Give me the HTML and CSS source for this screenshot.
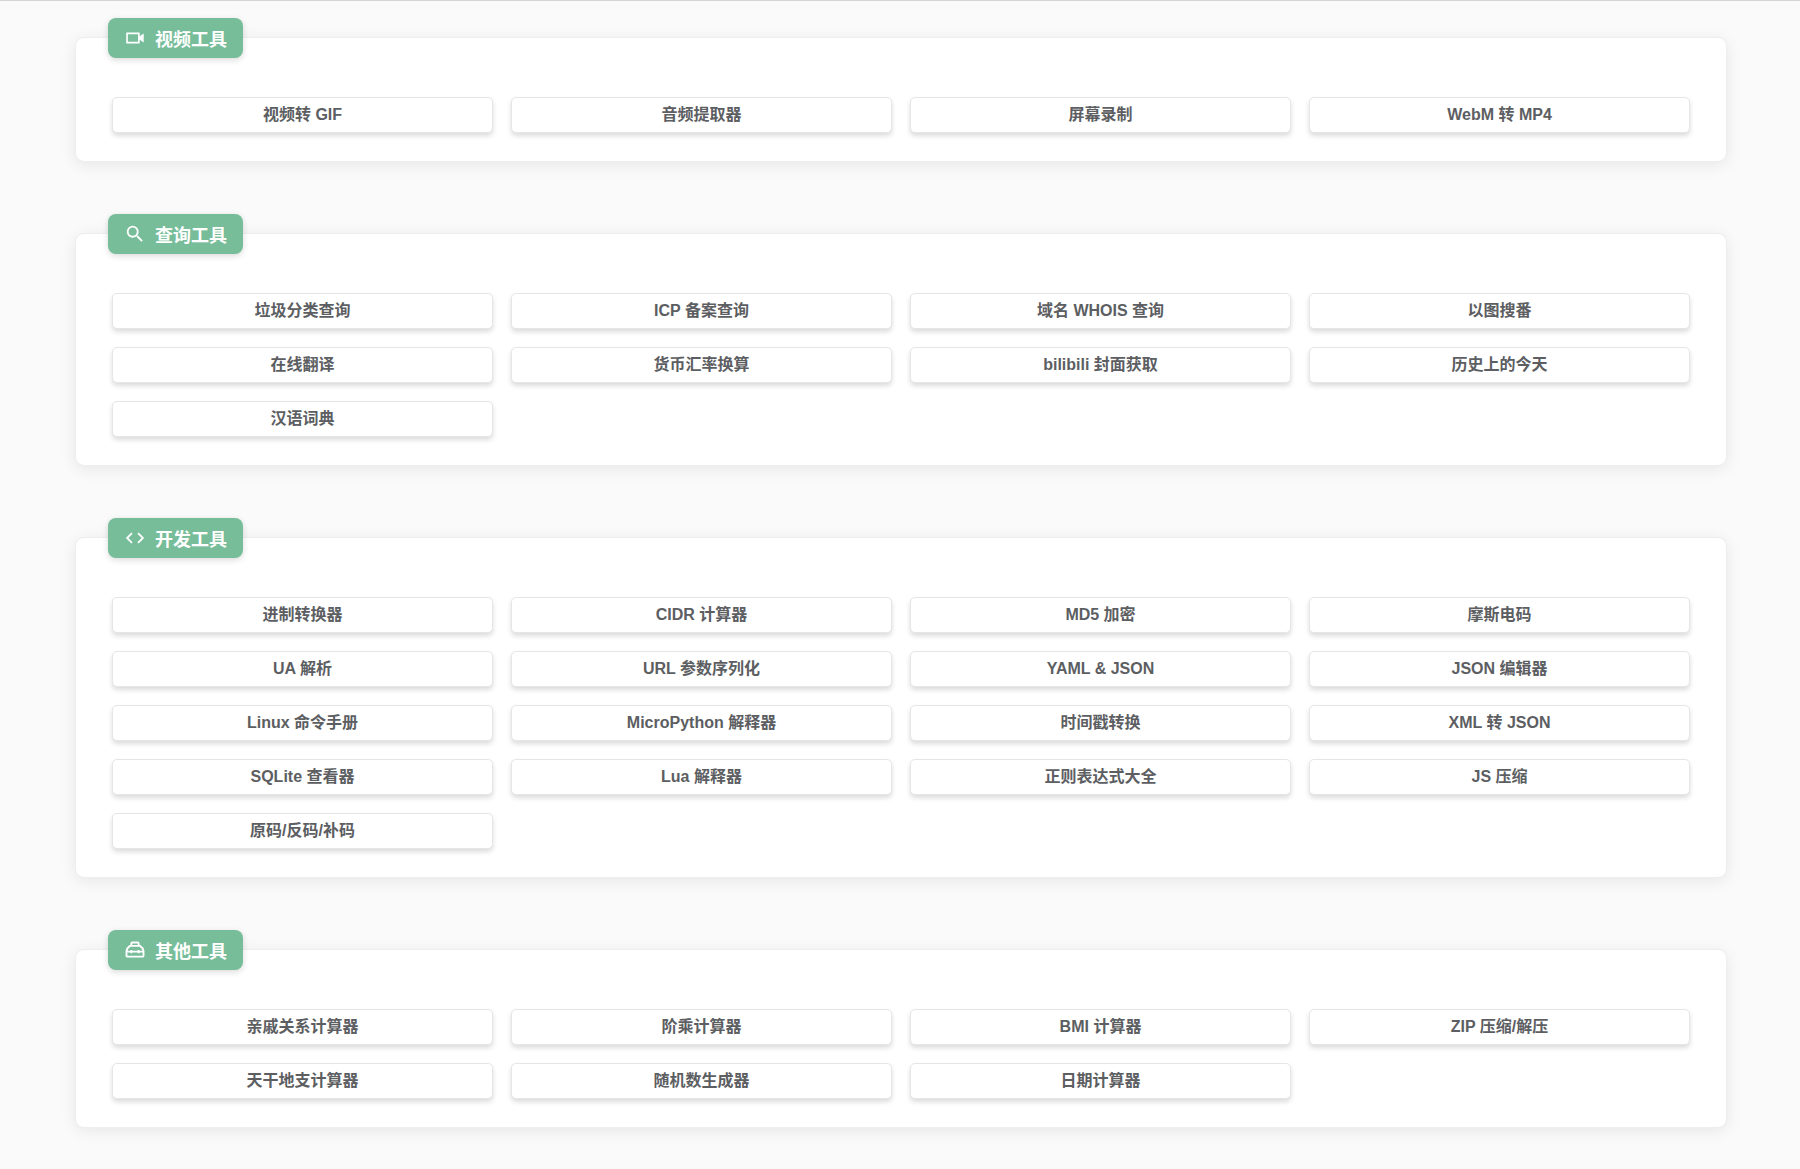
FILE: index.html
```html
<!DOCTYPE html>
<html lang="zh-CN">
<head>
  <meta charset="UTF-8" />
  <meta name="viewport" content="width=device-width, initial-scale=1.0"/>
  <title>在线工具</title>
  <link rel="stylesheet" href="styles.css">
</head>
<body>

<main class="container">
  <section class="card">
    <h2 class="card-title">
      <svg class="icon" viewBox="0 0 24 24"><path d="M3 6h13.500a.6.6 0 0 1 .6.6v3.600L21.500 7v10l-4.400-3.200v3.600a.6.6 0 0 1-.6.6H3a.6.6 0 0 1-.6-.6V6.600A.6.6 0 0 1 3 6zm1.200 1.800v8.400h11.100V7.800z"/></svg>
      视频工具
    </h2>
    <div class="tools">
      <a class="tool" href="#">视频转 GIF</a>
      <a class="tool" href="#">音频提取器</a>
      <a class="tool" href="#">屏幕录制</a>
      <a class="tool" href="#">WebM 转 MP4</a>
    </div>
  </section>

  <section class="card">
    <h2 class="card-title">
      <svg class="icon" viewBox="0 0 24 24"><path d="M15.500 14h-.79l-.28-.27A6.470 6.470 0 0 0 16 9.500 6.500 6.500 0 1 0 9.500 16c1.610 0 3.090-.59 4.230-1.570l.27.28v.79l5 4.990L20.490 19l-4.990-5zm-6 0C7.010 14 5 11.990 5 9.500S7.010 5 9.500 5 14 7.010 14 9.500 11.990 14 9.500 14z"/></svg>
      查询工具
    </h2>
    <div class="tools">
      <a class="tool" href="#">垃圾分类查询</a>
      <a class="tool" href="#">ICP 备案查询</a>
      <a class="tool" href="#">域名 WHOIS 查询</a>
      <a class="tool" href="#">以图搜番</a>
      <a class="tool" href="#">在线翻译</a>
      <a class="tool" href="#">货币汇率换算</a>
      <a class="tool" href="#">bilibili 封面获取</a>
      <a class="tool" href="#">历史上的今天</a>
      <a class="tool" href="#">汉语词典</a>
    </div>
  </section>

  <section class="card">
    <h2 class="card-title">
      <svg class="icon" viewBox="0 0 24 24"><path d="M9.400 16.600L4.800 12l4.600-4.600L8 6l-6 6 6 6 1.400-1.400zm5.200 0l4.600-4.600-4.600-4.600L16 6l6 6-6 6-1.400-1.400z"/></svg>
      开发工具
    </h2>
    <div class="tools">
      <a class="tool" href="#">进制转换器</a>
      <a class="tool" href="#">CIDR 计算器</a>
      <a class="tool" href="#">MD5 加密</a>
      <a class="tool" href="#">摩斯电码</a>
      <a class="tool" href="#">UA 解析</a>
      <a class="tool" href="#">URL 参数序列化</a>
      <a class="tool" href="#">YAML &amp; JSON</a>
      <a class="tool" href="#">JSON 编辑器</a>
      <a class="tool" href="#">Linux 命令手册</a>
      <a class="tool" href="#">MicroPython 解释器</a>
      <a class="tool" href="#">时间戳转换</a>
      <a class="tool" href="#">XML 转 JSON</a>
      <a class="tool" href="#">SQLite 查看器</a>
      <a class="tool" href="#">Lua 解释器</a>
      <a class="tool" href="#">正则表达式大全</a>
      <a class="tool" href="#">JS 压缩</a>
      <a class="tool" href="#">原码/反码/补码</a>
    </div>
  </section>

  <section class="card">
    <h2 class="card-title">
      <svg class="icon icon-line" viewBox="0 0 24 24"><path d="M8 7.500V4.800a1 1 0 0 1 1-1h6a1 1 0 0 1 1 1v2.700M6.500 7.500h11c2 1.300 3.400 3.300 3.800 5.700v5a1 1 0 0 1-1 1H3.700a1 1 0 0 1-1-1v-5c.4-2.400 1.800-4.400 3.800-5.700zM3 13.700h18M8 12v3.500M16 12v3.500"/></svg>
      其他工具
    </h2>
    <div class="tools">
      <a class="tool" href="#">亲戚关系计算器</a>
      <a class="tool" href="#">阶乘计算器</a>
      <a class="tool" href="#">BMI 计算器</a>
      <a class="tool" href="#">ZIP 压缩/解压</a>
      <a class="tool" href="#">天干地支计算器</a>
      <a class="tool" href="#">随机数生成器</a>
      <a class="tool" href="#">日期计算器</a>
    </div>
  </section>
</main>

</body>
</html>
```

FILE: styles.css
```css
:root {
  --primary: #77bd9a;
  --bg: #fafafa;
  --text: #5c5e62;
  --border: #eeeeee;
}

* {
  margin: 0;
  padding: 0;
  box-sizing: border-box;
}

body {
  background: var(--bg);
  font-family: "Liberation Sans", "Noto Sans CJK SC", sans-serif;
  color: var(--text);
  border-top: 1px solid #d4d4d4;
}

.container {
  display: flex;
  flex-direction: column;
  gap: 71px;
  padding: 36px 73px 41px 75px;
}

.card {
  background: #fff;
  border: 1px solid var(--border);
  border-radius: 9px;
  padding: 0 36px 28px;
  box-shadow: 0 3px 16px rgba(0, 0, 0, 0.08);
}

.card-title {
  display: flex;
  align-items: flex-start;
  gap: 9px;
  width: fit-content;
  height: 40px;
  margin: -20px 0 39px -4px;
  padding: 9px 16px 0;
  background: var(--primary);
  border-radius: 8px;
  color: #fff;
  font-size: 18px;
  line-height: 26px;
  box-shadow: 0 2px 6px rgba(0, 0, 0, 0.15);
}

.icon {
  width: 22px;
  height: 22px;
  fill: currentColor;
}

.icon-line {
  fill: none;
  stroke: currentColor;
  stroke-width: 2;
}

.tools {
  display: grid;
  grid-template-columns: repeat(4, 1fr);
  gap: 18px;
}

.tool {
  height: 36px;
  background: #fff;
  border: 1px solid #e6e6e6;
  border-radius: 5px;
  box-shadow: 0 3px 5px rgba(0, 0, 0, 0.14);
  color: inherit;
  font-size: 16px;
  font-weight: bold;
  line-height: 34px;
  text-align: center;
  text-decoration: none;
}

.tool:hover {
  color: var(--primary);
}

@media (max-width: 900px) {
  .container {
    padding-left: 20px;
    padding-right: 20px;
  }
  .tools {
    grid-template-columns: repeat(2, 1fr);
  }
}
```
